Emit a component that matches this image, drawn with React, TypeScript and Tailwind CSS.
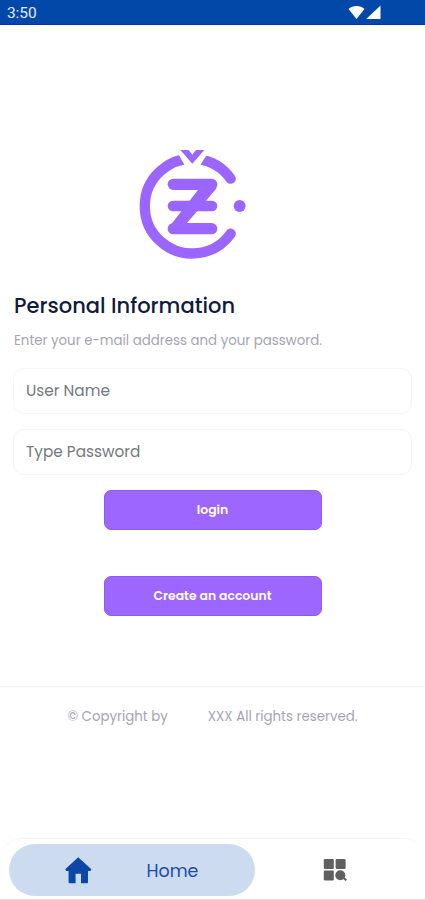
import React from "react";

function StatusBar() {
  return (
    <header className="flex h-[25px] shrink-0 items-center justify-between border-b border-[#0a2f9e] bg-[#0248a8] pl-[7px] pr-[43px] text-white">
      <span className="pt-[2px] font-['Roboto',sans-serif] text-[15.5px] leading-6 tracking-[-0.1px] text-[#e4ecfa]">3:50</span>
      <svg width="34" height="16" viewBox="0 0 34 16" fill="currentColor" aria-hidden="true" className="mt-px">
        <path d="M0.5 4.1C4.5 0.1 12.5 0.1 16.5 4.1L8.5 14.1Z" />
        <path d="M18.2 14.1L32.5 0.4V14.1Z" />
      </svg>
    </header>
  );
}

function Logo() {
  return (
    <svg width="125" height="130" viewBox="0 0 375 390" aria-hidden="true" className="ml-[130px] mt-[115px] shrink-0">
      <path d="M302 281A142 142 0 1 1 302 116" fill="none" stroke="#9b66ff" strokeWidth="31" strokeLinecap="round" />
      <path d="M138 30L177 98H197L239 30Z" fill="#fff" />
      <g fill="#9b66ff">
        <circle cx="329" cy="198" r="18" />
        <path d="M151 30H176L187 44L198 30H223L187 71Z" />
        <rect x="113" y="116" width="149" height="34" rx="17" />
        <rect x="113" y="182" width="149" height="32" rx="16" />
        <rect x="113" y="249" width="149" height="34" rx="17" />
        <path d="M204 150L216 130L260 139L258 147L171 249L150 268L119 259Z" />
      </g>
    </svg>
  );
}

function Field({ label, type, className }: { label: string; type: string; className: string }) {
  return (
    <input
      type={type}
      placeholder={label}
      aria-label={label}
      className={`block w-full rounded-[11px] border border-[#f5f5f6] bg-white px-3 pb-[2px] text-[15.3px] placeholder:text-[#74797e] ${className}`}
    />
  );
}

function HomeIcon() {
  return (
    <svg width="27" height="27" viewBox="0 0 27 27" fill="#0b46a8" aria-hidden="true">
      <path d="M13.2 0.3L0.2 12.3L1.2 13.9H3.6V25.2Q3.6 26.2 4.6 26.2H10.6V16.8H16V26.2H22Q23 26.2 23 25.2V13.9H25.4L26.4 12.3Z" />
    </svg>
  );
}

function GridSearchIcon() {
  return (
    <svg width="24" height="23" viewBox="0 0 24 23" fill="#606060" aria-hidden="true">
      <rect x="0.8" y="1" width="10" height="10" rx="1.2" />
      <rect x="12.6" y="1" width="10" height="10" rx="1.2" />
      <rect x="0.8" y="12.5" width="10" height="10" rx="1.2" />
      <circle cx="17.3" cy="17.3" r="5" />
      <path d="M19.5 19L23.3 22.3" stroke="#606060" strokeWidth="2" />
    </svg>
  );
}

export default function App() {
  return (
    <div className="flex h-[900px] w-[425px] flex-col overflow-hidden bg-white font-['Poppins','Inter',sans-serif]">
      <StatusBar />
      <Logo />
      <main className="flex flex-col px-[13px] pt-[21px]">
        <h1 className="h-[30px] whitespace-nowrap pl-px text-[21px] font-medium leading-[30px] text-[#111b3c]">Personal Information</h1>
        <p className="mt-[10px] h-5 whitespace-nowrap pl-px text-[13.35px] leading-5 text-[#a5a5b0]">Enter your e-mail address and your password.</p>
        <form className="mt-[17px] flex flex-col">
          <Field label="User Name" type="text" className="h-[46px]" />
          <Field label="Type Password" type="password" className="mt-[15px] h-[46px]" />
          <button type="button" className="mx-auto mt-[15px] h-10 w-[218px] rounded-[7px] border border-[#9058fa] bg-[#9c66ff] text-[12.4px] font-semibold text-white">login</button>
          <button type="button" className="mx-auto mt-[45.5px] h-10 w-[218px] rounded-[7px] border border-[#9058fa] bg-[#9c66ff] pt-px text-[12.4px] font-semibold text-white">Create an account</button>
        </form>
      </main>
      <footer className="mt-[70.5px] flex justify-center gap-[40px] border-t border-[#f2f2f4] pt-[20px] text-[13.35px] leading-5 text-[#a5a5b0]">
        <span>© Copyright by</span>
        <span>XXX All rights reserved.</span>
      </footer>
      <nav className="mt-auto flex h-[62px] shrink-0 items-start rounded-t-[22px] border-b border-t border-b-[#e4e4e4] border-t-[#f6f6f6] pl-[9px] pt-[5px]">
        <div className="flex h-[52px] w-[246px] items-center rounded-full bg-[#ccdbef] pl-[55.5px] text-[#1c4aa5]">
          <HomeIcon />
          <span className="ml-[55px] pt-[2px] text-[17.4px]">Home</span>
        </div>
        <div className="ml-[68px] mt-[14px]"><GridSearchIcon /></div>
      </nav>
    </div>
  );
}
